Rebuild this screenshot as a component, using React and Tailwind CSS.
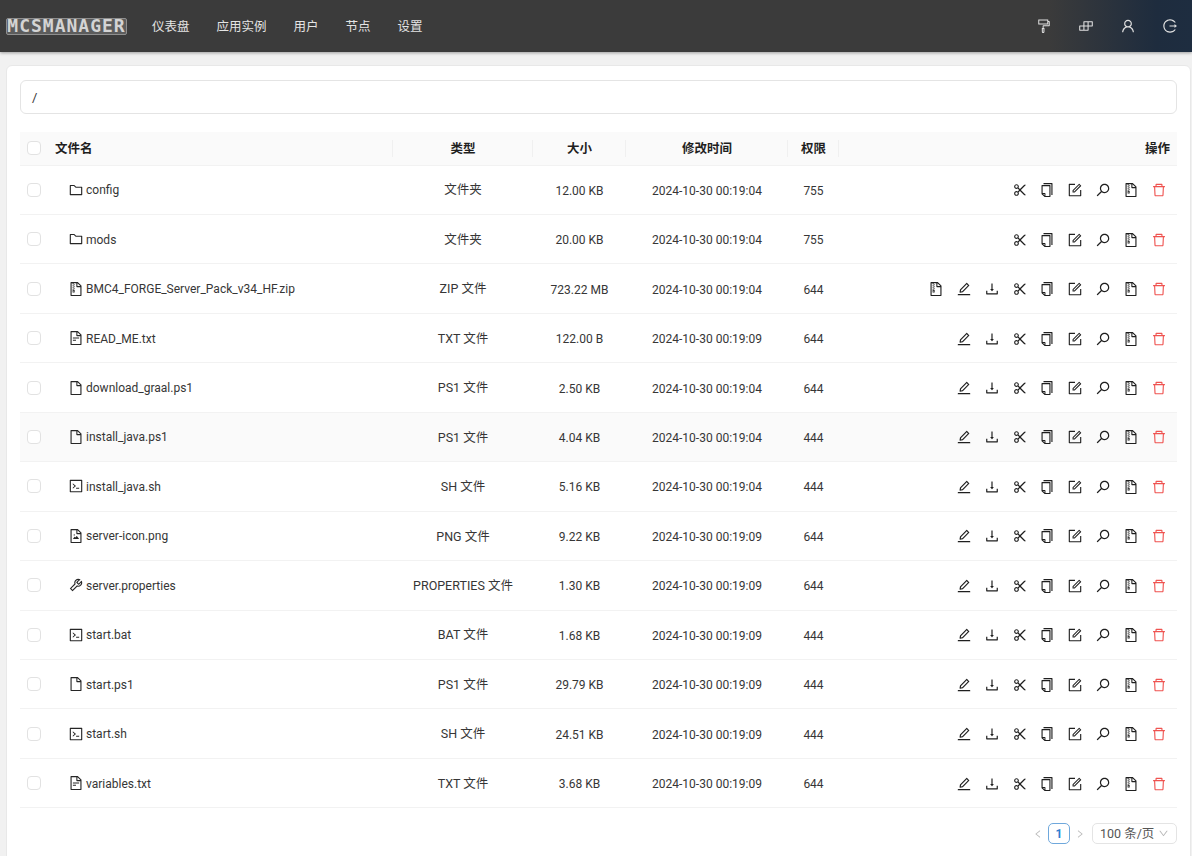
import React from 'react';
import {
  AiOutlineBuild,
  AiOutlineCode,
  AiOutlineCopy,
  AiOutlineDelete,
  AiOutlineDown,
  AiOutlineDownload,
  AiOutlineEdit,
  AiOutlineFile,
  AiOutlineFileImage,
  AiOutlineFileText,
  AiOutlineFileZip,
  AiOutlineFolder,
  AiOutlineForm,
  AiOutlineFormatPainter,
  AiOutlineLeft,
  AiOutlineLogout,
  AiOutlineRight,
  AiOutlineScissor,
  AiOutlineSearch,
  AiOutlineTool,
  AiOutlineUser,
} from 'react-icons/ai';

const navItems = ['仪表盘', '应用实例', '用户', '节点', '设置'];
const topIcons = [AiOutlineFormatPainter, AiOutlineBuild, AiOutlineUser, AiOutlineLogout];

const files = [
  { name: 'config', icon: AiOutlineFolder, type: '文件夹', size: '12.00 KB', time: '2024-10-30 00:19:04', perm: '755', kind: 'dir' },
  { name: 'mods', icon: AiOutlineFolder, type: '文件夹', size: '20.00 KB', time: '2024-10-30 00:19:04', perm: '755', kind: 'dir' },
  { name: 'BMC4_FORGE_Server_Pack_v34_HF.zip', icon: AiOutlineFileZip, type: 'ZIP 文件', size: '723.22 MB', time: '2024-10-30 00:19:04', perm: '644', kind: 'zip' },
  { name: 'READ_ME.txt', icon: AiOutlineFileText, type: 'TXT 文件', size: '122.00 B', time: '2024-10-30 00:19:09', perm: '644' },
  { name: 'download_graal.ps1', icon: AiOutlineFile, type: 'PS1 文件', size: '2.50 KB', time: '2024-10-30 00:19:04', perm: '644' },
  { name: 'install_java.ps1', icon: AiOutlineFile, type: 'PS1 文件', size: '4.04 KB', time: '2024-10-30 00:19:04', perm: '444', hover: true },
  { name: 'install_java.sh', icon: AiOutlineCode, type: 'SH 文件', size: '5.16 KB', time: '2024-10-30 00:19:04', perm: '444' },
  { name: 'server-icon.png', icon: AiOutlineFileImage, type: 'PNG 文件', size: '9.22 KB', time: '2024-10-30 00:19:09', perm: '644' },
  { name: 'server.properties', icon: AiOutlineTool, type: 'PROPERTIES 文件', size: '1.30 KB', time: '2024-10-30 00:19:09', perm: '644' },
  { name: 'start.bat', icon: AiOutlineCode, type: 'BAT 文件', size: '1.68 KB', time: '2024-10-30 00:19:09', perm: '444' },
  { name: 'start.ps1', icon: AiOutlineFile, type: 'PS1 文件', size: '29.79 KB', time: '2024-10-30 00:19:09', perm: '444' },
  { name: 'start.sh', icon: AiOutlineCode, type: 'SH 文件', size: '24.51 KB', time: '2024-10-30 00:19:09', perm: '444' },
  { name: 'variables.txt', icon: AiOutlineFileText, type: 'TXT 文件', size: '3.68 KB', time: '2024-10-30 00:19:09', perm: '644' },
];

const headers = ['类型', '大小', '修改时间', '权限'];

const Checkbox = () => (
  <span className="block w-[14px] h-[14px] rounded-[4px] border border-[#e2e2e2] bg-white" />
);

const FlippedSearch = () => <AiOutlineSearch className="text-[16px] -scale-x-100" />;

const RowActions = ({ kind }) => {
  const icons = [AiOutlineScissor, AiOutlineCopy, AiOutlineForm, FlippedSearch, AiOutlineFileZip];
  if (kind !== 'dir') icons.unshift(AiOutlineEdit, AiOutlineDownload);
  if (kind === 'zip') icons.unshift(AiOutlineFileZip);

  return (
    <div className="flex justify-end gap-[11.9px] pr-[10px] text-[#1f1f1f]">
      {icons.map((Icon, i) => (
        <span key={i} className="w-[16px] h-[16px] flex items-center justify-center">
          <Icon className="text-[16px] shrink-0" />
        </span>
      ))}
      <span className="w-[16px] h-[16px] flex items-center justify-center text-[#ef5350]">
        <AiOutlineDelete className="text-[16px] shrink-0" />
      </span>
    </div>
  );
};

const App = () => {
  return (
    <div className="h-[856px] overflow-hidden bg-[#f1f1f1] font-['Roboto','Noto_Sans_CJK_SC',sans-serif] text-[12.5px] text-[#363636]">
      <header className="h-[52px] flex items-center justify-between pl-[6px] pr-[14px] bg-[linear-gradient(90deg,#3b3b3b_0%,#3b3b3b_88%,#1e2c3e_97%,#1e2d40_100%)] shadow-[0_1px_3px_rgba(0,0,0,0.35)]">
        <div className="flex items-center">
          <div className="w-[121px] h-[17px] flex items-center justify-center rounded-[2px] border border-[#8f8f8f] bg-[#5c5c5c] font-['DejaVu_Sans_Mono',monospace] text-[18px] leading-none tracking-[1px] font-bold text-[#d4d4d4]">
            MCSMANAGER
          </div>
          <nav className="flex gap-[27px] ml-[25px] pt-[2px] text-[#e4e4e4]">
            {navItems.map((item) => (
              <span key={item}>{item}</span>
            ))}
          </nav>
        </div>
        <div className="flex items-center gap-[26px] text-[#e0e0e0]">
          {topIcons.map((Icon, i) => (
            <Icon key={i} className="text-[16px]" />
          ))}
        </div>
      </header>

      <main className="ml-[6px] mr-[1px] mt-[13px] h-[800px] rounded-t-[6px] border border-[#e8e8e8] bg-white pl-[13px] pr-[13px] pt-[14px]">
        <div className="h-[34px] flex items-center pt-[1px] px-[11px] rounded-[6px] border border-[#e4e4e4] text-[13px]">/</div>

        <table className="w-[1157px] mt-[18px] table-fixed border-collapse">
          <colgroup>
            <col className="w-[28px]" />
            <col className="w-[345px]" />
            <col className="w-[140px]" />
            <col className="w-[93px]" />
            <col className="w-[162px]" />
            <col className="w-[51px]" />
            <col />
          </colgroup>
          <thead>
            <tr className="h-[33px] bg-[#fafafa] border-b border-[#f2f2f2] text-[#1f1f1f]">
              <th className="pl-[7px]"><Checkbox /></th>
              <th className="relative pl-[7px] pt-[2px] text-left font-bold">
                文件名
                <span className="absolute right-0 top-[8px] h-[17px] w-px bg-[#f0f0f0]" />
              </th>
              {headers.map((label) => (
                <th key={label} className="relative pt-[2px] font-bold">
                  {label}
                  <span className="absolute right-0 top-[8px] h-[17px] w-px bg-[#f0f0f0]" />
                </th>
              ))}
              <th className="pr-[7px] pt-[2px] text-right font-bold">操作</th>
            </tr>
          </thead>
          <tbody>
            {files.map((file) => {
              const Icon = file.icon;
              return (
                <tr key={file.name} className={`h-[49.46px] border-b border-[#f2f2f2] ${file.hover ? 'bg-[#fafafa]' : ''}`}>
                  <td className="pl-[7px]"><Checkbox /></td>
                  <td className="pl-[20px]">
                    <span className="flex items-center gap-[2px]">
                      <Icon className="text-[16px] text-[#262626] shrink-0" />
                      <span className="pt-[1px] text-[12px] whitespace-nowrap">{file.name}</span>
                    </span>
                  </td>
                  <td className="pt-[2px] text-center whitespace-nowrap">{file.type}</td>
                  <td className="pt-[2px] text-center text-[12px]">{file.size}</td>
                  <td className="pt-[2px] text-center text-[12px] whitespace-nowrap">{file.time}</td>
                  <td className="pt-[2px] text-center text-[12px]">{file.perm}</td>
                  <td className="pt-[1px]"><RowActions kind={file.kind} /></td>
                </tr>
              );
            })}
          </tbody>
        </table>

        <div className="flex items-center justify-end mt-[15px] text-[#555555]">
          <AiOutlineLeft className="text-[10px] text-[#b8b8b8]" />
          <span className="w-[22px] h-[21px] ml-[5px] flex items-center justify-center rounded-[5px] border border-[#6fa8dc] text-[12px] font-bold text-[#2f7fd0]">1</span>
          <AiOutlineRight className="text-[10px] ml-[5px] mr-[7px] text-[#b8b8b8]" />
          <div className="w-[85px] h-[21px] flex items-center justify-between pl-[7px] pr-[7px] rounded-[5px] border border-[#e4e4e4]">
            <span className="whitespace-nowrap">100 条/页</span>
            <AiOutlineDown className="text-[11px] text-[#b8b8b8]" />
          </div>
        </div>
      </main>
    </div>
  );
};

export default App;
